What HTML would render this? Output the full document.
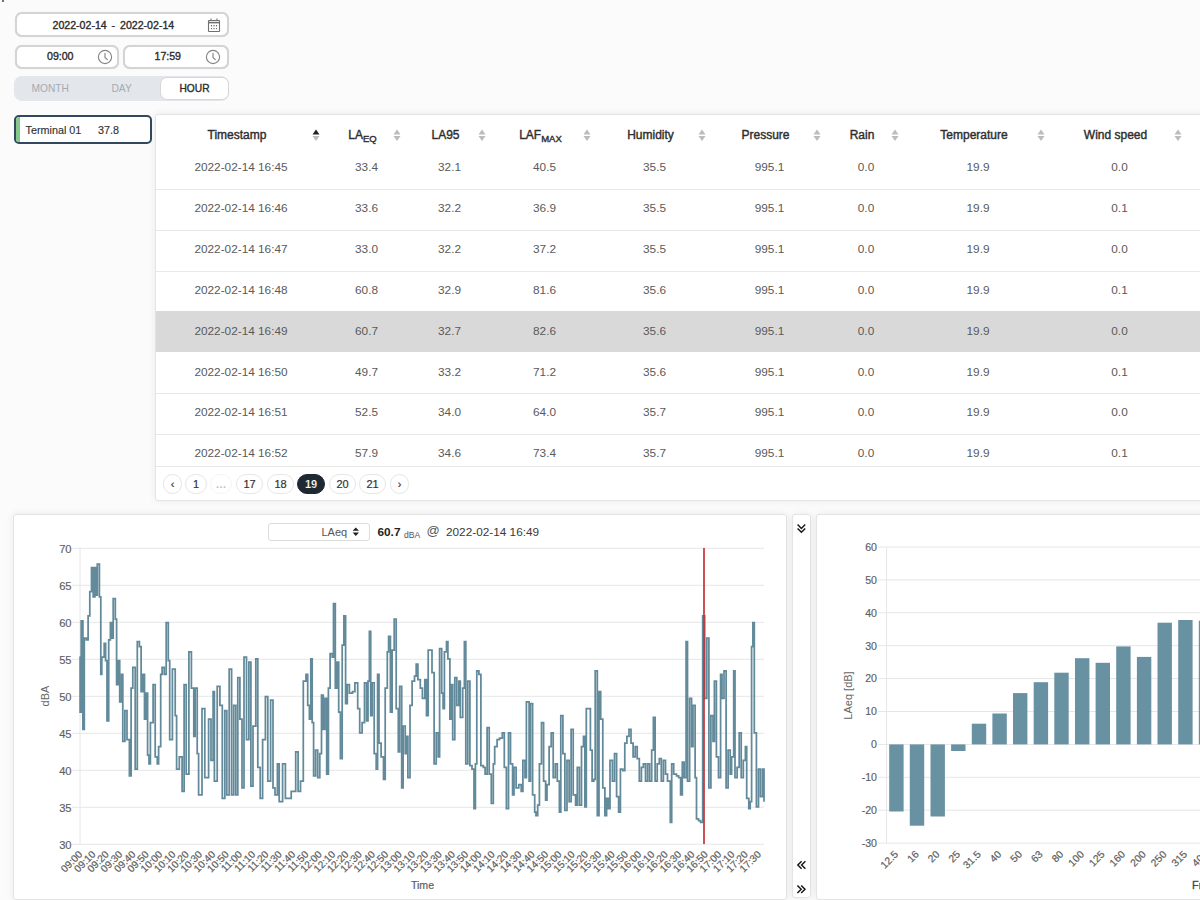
<!DOCTYPE html><html><head><meta charset="utf-8"><style>
*{box-sizing:border-box;margin:0;padding:0}
html,body{width:1200px;height:900px;overflow:hidden;background:#fbfbfb;font-family:"Liberation Sans", sans-serif;}
.abs{position:absolute}
.inp{position:absolute;background:#fff;border:2px solid #d4d4d4;border-radius:7px;box-shadow:0 0 1px rgba(0,0,0,0.15)}
.inp .t{position:absolute;font-size:11px;font-weight:bold;color:#333;white-space:nowrap}
.panel{position:absolute;background:#fff;border:1px solid #e4e4e4;border-radius:3px;box-shadow:0 0 8px rgba(0,0,0,0.07);}
.th{position:absolute;top:128px;font-size:12px;color:#2e2e2e;-webkit-text-stroke:0.4px #2e2e2e;white-space:nowrap;transform:translateX(-50%)} .th sub{font-size:9.5px;vertical-align:-3px;line-height:0}
.td{position:absolute;font-size:11.8px;color:#5a5a5a;white-space:nowrap;transform:translateX(-50%)}
.pg{position:absolute;top:473.5px;height:20px;border:1px solid #e6e6e6;border-radius:10px;font-size:11px;color:#333;-webkit-text-stroke:0.2px #333;text-align:center;line-height:18px;background:#fff}
</style></head><body>
<div class="abs" style="left:2px;top:0;width:1.5px;height:2px;background:#444;border-radius:1px"></div>
<div class="inp" style="left:15px;top:12px;width:214px;height:25px"></div>
<div class="abs" style="left:52.5px;top:19px;font-size:10.6px;color:#2b2b2b;-webkit-text-stroke:0.35px #2b2b2b;white-space:nowrap">2022-02-14</div>
<div class="abs" style="left:111.5px;top:19px;font-size:10.6px;color:#2b2b2b;-webkit-text-stroke:0.35px #2b2b2b;white-space:nowrap">-</div>
<div class="abs" style="left:120px;top:19px;font-size:10.6px;color:#2b2b2b;-webkit-text-stroke:0.35px #2b2b2b;white-space:nowrap">2022-02-14</div>
<svg class="abs" style="left:206px;top:17px" width="16" height="16"><g fill="none" stroke="#707070" stroke-width="1.1"><rect x="2.5" y="3.5" width="11" height="11" rx="0.5"/><line x1="2.5" y1="5.6" x2="13.5" y2="5.6" stroke-width="1.6"/><line x1="5" y1="1.5" x2="5" y2="3.5"/><line x1="11" y1="1.5" x2="11" y2="3.5"/></g><g fill="#555"><circle cx="5.5" cy="8.7" r="0.7"/><circle cx="8" cy="8.7" r="0.7"/><circle cx="10.5" cy="8.7" r="0.7"/><circle cx="5.5" cy="11.6" r="0.7"/><circle cx="8" cy="11.6" r="0.7"/><circle cx="10.5" cy="11.6" r="0.7"/></g></svg>
<div class="inp" style="left:15px;top:45px;width:104px;height:24px"></div>
<div class="abs" style="left:47px;top:50.4px;font-size:10.6px;color:#2b2b2b;-webkit-text-stroke:0.35px #2b2b2b;white-space:nowrap">09:00</div>
<svg class="abs" style="left:97.3px;top:48.7px" width="16" height="16"><g fill="none" stroke="#858585" stroke-width="1.15"><circle cx="8" cy="8" r="6.6"/><path d="M8 4.2 V8.4 L10.3 10.6" stroke-linecap="round"/></g></svg>
<div class="inp" style="left:123px;top:45px;width:106px;height:24px"></div>
<div class="abs" style="left:154.5px;top:50.4px;font-size:10.6px;color:#2b2b2b;-webkit-text-stroke:0.35px #2b2b2b;white-space:nowrap">17:59</div>
<svg class="abs" style="left:205px;top:48.7px" width="16" height="16"><g fill="none" stroke="#858585" stroke-width="1.15"><circle cx="8" cy="8" r="6.6"/><path d="M8 4.2 V8.4 L10.3 10.6" stroke-linecap="round"/></g></svg>
<div class="abs" style="left:14px;top:76px;width:215px;height:25px;background:#e3e6ea;border-radius:8px"></div>
<div class="abs" style="left:31.5px;top:82.5px;font-size:10.2px;color:#a3abb3">MONTH</div>
<div class="abs" style="left:111.5px;top:82.5px;font-size:10.2px;color:#a3abb3">DAY</div>
<div class="abs" style="left:160px;top:77px;width:69px;height:23px;background:#fff;border:1.5px solid #d6d6d6;border-radius:7px"></div>
<div class="abs" style="left:179.5px;top:82.5px;font-size:10.2px;color:#2b2b2b;-webkit-text-stroke:0.35px #2b2b2b">HOUR</div>
<div class="abs" style="left:14px;top:115.2px;width:138px;height:29px;background:#fff;border:2.4px solid #32485e;border-radius:5px;overflow:hidden"><div class="abs" style="left:0;top:0;width:4px;height:100%;background:#86c78b"></div></div>
<div class="abs" style="left:25.5px;top:123.5px;font-size:10.8px;color:#333;-webkit-text-stroke:0.15px #333">Terminal 01</div>
<div class="abs" style="left:98px;top:123.5px;font-size:10.8px;color:#333;-webkit-text-stroke:0.15px #333">37.8</div>
<div class="panel" style="left:155px;top:114px;width:1060px;height:387px"></div>
<div class="abs" style="left:156px;top:311px;width:1044px;height:41px;background:#d9d9d9"></div>
<div class="abs" style="left:156px;top:188.5px;width:1044px;height:1px;background:#e8e8e8"></div>
<div class="abs" style="left:156px;top:229.5px;width:1044px;height:1px;background:#e8e8e8"></div>
<div class="abs" style="left:156px;top:270.5px;width:1044px;height:1px;background:#e8e8e8"></div>
<div class="abs" style="left:156px;top:393px;width:1044px;height:1px;background:#e8e8e8"></div>
<div class="abs" style="left:156px;top:433.5px;width:1044px;height:1px;background:#e8e8e8"></div>
<div class="abs" style="left:156px;top:466px;width:1044px;height:1px;background:#e8e8e8"></div>
<div class="th" style="left:237.0px">Timestamp</div>
<svg class="abs" style="left:312px;top:129px" width="8" height="13"><path d="M0.5 5.5 L4 0.5 L7.5 5.5Z" fill="#222"/><path d="M0.5 7 L4 12 L7.5 7Z" fill="#bbb"/></svg>
<div class="th" style="left:362.5px">LA<sub>EQ</sub></div>
<svg class="abs" style="left:393px;top:129px" width="8" height="13"><path d="M0.5 5.5 L4 0.5 L7.5 5.5Z" fill="#bbb"/><path d="M0.5 7 L4 12 L7.5 7Z" fill="#bbb"/></svg>
<div class="th" style="left:445.5px">LA95</div>
<svg class="abs" style="left:478px;top:129px" width="8" height="13"><path d="M0.5 5.5 L4 0.5 L7.5 5.5Z" fill="#bbb"/><path d="M0.5 7 L4 12 L7.5 7Z" fill="#bbb"/></svg>
<div class="th" style="left:540.5px">LAF<sub>MAX</sub></div>
<svg class="abs" style="left:583px;top:129px" width="8" height="13"><path d="M0.5 5.5 L4 0.5 L7.5 5.5Z" fill="#bbb"/><path d="M0.5 7 L4 12 L7.5 7Z" fill="#bbb"/></svg>
<div class="th" style="left:650.5px">Humidity</div>
<svg class="abs" style="left:698px;top:129px" width="8" height="13"><path d="M0.5 5.5 L4 0.5 L7.5 5.5Z" fill="#bbb"/><path d="M0.5 7 L4 12 L7.5 7Z" fill="#bbb"/></svg>
<div class="th" style="left:765.5px">Pressure</div>
<svg class="abs" style="left:813px;top:129px" width="8" height="13"><path d="M0.5 5.5 L4 0.5 L7.5 5.5Z" fill="#bbb"/><path d="M0.5 7 L4 12 L7.5 7Z" fill="#bbb"/></svg>
<div class="th" style="left:862.0px">Rain</div>
<svg class="abs" style="left:891px;top:129px" width="8" height="13"><path d="M0.5 5.5 L4 0.5 L7.5 5.5Z" fill="#bbb"/><path d="M0.5 7 L4 12 L7.5 7Z" fill="#bbb"/></svg>
<div class="th" style="left:974.0px">Temperature</div>
<svg class="abs" style="left:1037px;top:129px" width="8" height="13"><path d="M0.5 5.5 L4 0.5 L7.5 5.5Z" fill="#bbb"/><path d="M0.5 7 L4 12 L7.5 7Z" fill="#bbb"/></svg>
<div class="th" style="left:1115.5px">Wind speed</div>
<svg class="abs" style="left:1174px;top:129px" width="8" height="13"><path d="M0.5 5.5 L4 0.5 L7.5 5.5Z" fill="#bbb"/><path d="M0.5 7 L4 12 L7.5 7Z" fill="#bbb"/></svg>
<div class="abs" style="left:156px;top:148px;width:1044px;height:318px;overflow:hidden">
<div class="td" style="left:85.0px;top:12.0px">2022-02-14 16:45</div>
<div class="td" style="left:210.5px;top:12.0px">33.4</div>
<div class="td" style="left:293.5px;top:12.0px">32.1</div>
<div class="td" style="left:388.5px;top:12.0px">40.5</div>
<div class="td" style="left:498.5px;top:12.0px">35.5</div>
<div class="td" style="left:613.5px;top:12.0px">995.1</div>
<div class="td" style="left:710.0px;top:12.0px">0.0</div>
<div class="td" style="left:822.0px;top:12.0px">19.9</div>
<div class="td" style="left:963.5px;top:12.0px">0.0</div>
<div class="td" style="left:85.0px;top:52.9px">2022-02-14 16:46</div>
<div class="td" style="left:210.5px;top:52.9px">33.6</div>
<div class="td" style="left:293.5px;top:52.9px">32.2</div>
<div class="td" style="left:388.5px;top:52.9px">36.9</div>
<div class="td" style="left:498.5px;top:52.9px">35.5</div>
<div class="td" style="left:613.5px;top:52.9px">995.1</div>
<div class="td" style="left:710.0px;top:52.9px">0.0</div>
<div class="td" style="left:822.0px;top:52.9px">19.9</div>
<div class="td" style="left:963.5px;top:52.9px">0.1</div>
<div class="td" style="left:85.0px;top:93.8px">2022-02-14 16:47</div>
<div class="td" style="left:210.5px;top:93.8px">33.0</div>
<div class="td" style="left:293.5px;top:93.8px">32.2</div>
<div class="td" style="left:388.5px;top:93.8px">37.2</div>
<div class="td" style="left:498.5px;top:93.8px">35.5</div>
<div class="td" style="left:613.5px;top:93.8px">995.1</div>
<div class="td" style="left:710.0px;top:93.8px">0.0</div>
<div class="td" style="left:822.0px;top:93.8px">19.9</div>
<div class="td" style="left:963.5px;top:93.8px">0.0</div>
<div class="td" style="left:85.0px;top:134.7px">2022-02-14 16:48</div>
<div class="td" style="left:210.5px;top:134.7px">60.8</div>
<div class="td" style="left:293.5px;top:134.7px">32.9</div>
<div class="td" style="left:388.5px;top:134.7px">81.6</div>
<div class="td" style="left:498.5px;top:134.7px">35.6</div>
<div class="td" style="left:613.5px;top:134.7px">995.1</div>
<div class="td" style="left:710.0px;top:134.7px">0.0</div>
<div class="td" style="left:822.0px;top:134.7px">19.9</div>
<div class="td" style="left:963.5px;top:134.7px">0.1</div>
<div class="td" style="left:85.0px;top:175.6px">2022-02-14 16:49</div>
<div class="td" style="left:210.5px;top:175.6px">60.7</div>
<div class="td" style="left:293.5px;top:175.6px">32.7</div>
<div class="td" style="left:388.5px;top:175.6px">82.6</div>
<div class="td" style="left:498.5px;top:175.6px">35.6</div>
<div class="td" style="left:613.5px;top:175.6px">995.1</div>
<div class="td" style="left:710.0px;top:175.6px">0.0</div>
<div class="td" style="left:822.0px;top:175.6px">19.9</div>
<div class="td" style="left:963.5px;top:175.6px">0.0</div>
<div class="td" style="left:85.0px;top:216.5px">2022-02-14 16:50</div>
<div class="td" style="left:210.5px;top:216.5px">49.7</div>
<div class="td" style="left:293.5px;top:216.5px">33.2</div>
<div class="td" style="left:388.5px;top:216.5px">71.2</div>
<div class="td" style="left:498.5px;top:216.5px">35.6</div>
<div class="td" style="left:613.5px;top:216.5px">995.1</div>
<div class="td" style="left:710.0px;top:216.5px">0.0</div>
<div class="td" style="left:822.0px;top:216.5px">19.9</div>
<div class="td" style="left:963.5px;top:216.5px">0.1</div>
<div class="td" style="left:85.0px;top:257.4px">2022-02-14 16:51</div>
<div class="td" style="left:210.5px;top:257.4px">52.5</div>
<div class="td" style="left:293.5px;top:257.4px">34.0</div>
<div class="td" style="left:388.5px;top:257.4px">64.0</div>
<div class="td" style="left:498.5px;top:257.4px">35.7</div>
<div class="td" style="left:613.5px;top:257.4px">995.1</div>
<div class="td" style="left:710.0px;top:257.4px">0.0</div>
<div class="td" style="left:822.0px;top:257.4px">19.9</div>
<div class="td" style="left:963.5px;top:257.4px">0.0</div>
<div class="td" style="left:85.0px;top:298.3px">2022-02-14 16:52</div>
<div class="td" style="left:210.5px;top:298.3px">57.9</div>
<div class="td" style="left:293.5px;top:298.3px">34.6</div>
<div class="td" style="left:388.5px;top:298.3px">73.4</div>
<div class="td" style="left:498.5px;top:298.3px">35.7</div>
<div class="td" style="left:613.5px;top:298.3px">995.1</div>
<div class="td" style="left:710.0px;top:298.3px">0.0</div>
<div class="td" style="left:822.0px;top:298.3px">19.9</div>
<div class="td" style="left:963.5px;top:298.3px">0.1</div>
</div>
<div class="pg" style="left:163px;width:19px;">&lsaquo;</div>
<div class="pg" style="left:185px;width:22px;">1</div>
<div class="pg" style="left:210px;width:22px;border-color:#f5f5f5;color:#e4e4e4">&hellip;</div>
<div class="pg" style="left:236px;width:27px;">17</div>
<div class="pg" style="left:267px;width:27px;">18</div>
<div class="pg" style="left:297px;width:28px;background:#1f2933;border-color:#1f2933;color:#fff;font-weight:bold">19</div>
<div class="pg" style="left:329px;width:27px;">20</div>
<div class="pg" style="left:359px;width:27px;">21</div>
<div class="pg" style="left:390px;width:19px;">&rsaquo;</div>
<div class="panel" style="left:13px;top:513.5px;width:773.5px;height:386px"></div>
<div class="panel" style="left:792px;top:513.5px;width:18.5px;height:384px"></div>
<div class="panel" style="left:816px;top:513.5px;width:400px;height:386px"></div>
<div class="abs" style="left:267.5px;top:523px;width:102.5px;height:17.5px;border:1px solid #dcdcdc;border-radius:3px;background:#fff"></div>
<div class="abs" style="left:321.5px;top:526px;font-size:11px;color:#555">LAeq</div>
<svg class="abs" style="left:352px;top:527px" width="8" height="10"><path d="M0.6 3.8 L3.8 0.4 L7 3.8Z M0.6 5.6 L3.8 9 L7 5.6Z" fill="#222"/></svg>
<div class="abs" style="left:377.5px;top:525.3px;font-size:11.8px;font-weight:bold;color:#222">60.7</div>
<div class="abs" style="left:404px;top:529.5px;font-size:8.6px;color:#555">dBA</div>
<div class="abs" style="left:426.5px;top:523.3px;font-size:13px;color:#555">@</div>
<div class="abs" style="left:446px;top:525.3px;font-size:11.8px;color:#3a3a3a">2022-02-14 16:49</div>
<svg class="abs" style="left:792px;top:518px" width="18" height="380"><g fill="none" stroke="#151515" stroke-width="1.45"><path d="M5.6 6.6 L9.4 10.4 L13.2 6.6"/><path d="M5.6 10.4 L9.4 14.2 L13.2 10.4"/><path d="M9.6 343.2 L5.8 347 L9.6 350.8"/><path d="M13.4 343.2 L9.6 347 L13.4 350.8"/><path d="M5.4 367.4 L9.2 371.2 L5.4 375"/><path d="M9.2 367.4 L13 371.2 L9.2 375"/></g></svg>
<svg class="abs" style="left:0;top:0" width="1200" height="900" font-family="Liberation Sans, sans-serif">
<line x1="72" x2="764" y1="548.3" y2="548.3" stroke="#e6e6e6" stroke-width="1"/>
<text x="71.6" y="552.5" text-anchor="end" font-size="11.2" fill="#5e5e5e" stroke="#5e5e5e" stroke-width="0.15">70</text>
<line x1="72" x2="764" y1="585.3" y2="585.3" stroke="#e6e6e6" stroke-width="1"/>
<text x="71.6" y="589.5" text-anchor="end" font-size="11.2" fill="#5e5e5e" stroke="#5e5e5e" stroke-width="0.15">65</text>
<line x1="72" x2="764" y1="622.3" y2="622.3" stroke="#e6e6e6" stroke-width="1"/>
<text x="71.6" y="626.5" text-anchor="end" font-size="11.2" fill="#5e5e5e" stroke="#5e5e5e" stroke-width="0.15">60</text>
<line x1="72" x2="764" y1="659.3" y2="659.3" stroke="#e6e6e6" stroke-width="1"/>
<text x="71.6" y="663.5" text-anchor="end" font-size="11.2" fill="#5e5e5e" stroke="#5e5e5e" stroke-width="0.15">55</text>
<line x1="72" x2="764" y1="696.3" y2="696.3" stroke="#e6e6e6" stroke-width="1"/>
<text x="71.6" y="700.5" text-anchor="end" font-size="11.2" fill="#5e5e5e" stroke="#5e5e5e" stroke-width="0.15">50</text>
<line x1="72" x2="764" y1="733.3" y2="733.3" stroke="#e6e6e6" stroke-width="1"/>
<text x="71.6" y="737.5" text-anchor="end" font-size="11.2" fill="#5e5e5e" stroke="#5e5e5e" stroke-width="0.15">45</text>
<line x1="72" x2="764" y1="770.3" y2="770.3" stroke="#e6e6e6" stroke-width="1"/>
<text x="71.6" y="774.5" text-anchor="end" font-size="11.2" fill="#5e5e5e" stroke="#5e5e5e" stroke-width="0.15">40</text>
<line x1="72" x2="764" y1="807.3" y2="807.3" stroke="#e6e6e6" stroke-width="1"/>
<text x="71.6" y="811.5" text-anchor="end" font-size="11.2" fill="#5e5e5e" stroke="#5e5e5e" stroke-width="0.15">35</text>
<line x1="72" x2="764" y1="844.3" y2="844.3" stroke="#e6e6e6" stroke-width="1"/>
<text x="71.6" y="848.5" text-anchor="end" font-size="11.2" fill="#5e5e5e" stroke="#5e5e5e" stroke-width="0.15">30</text>
<line x1="80" x2="80" y1="548" y2="844.5" stroke="#e6e6e6" stroke-width="1"/>
<text transform="translate(48.5,696) rotate(-90)" text-anchor="middle" font-size="11" fill="#666">dBA</text>
<text transform="translate(83.0,855) rotate(-45)" text-anchor="end" font-size="10.2" fill="#5e5e5e" stroke="#5e5e5e" stroke-width="0.2">09:00</text>
<text transform="translate(96.3,855) rotate(-45)" text-anchor="end" font-size="10.2" fill="#5e5e5e" stroke="#5e5e5e" stroke-width="0.2">09:10</text>
<text transform="translate(109.6,855) rotate(-45)" text-anchor="end" font-size="10.2" fill="#5e5e5e" stroke="#5e5e5e" stroke-width="0.2">09:20</text>
<text transform="translate(122.9,855) rotate(-45)" text-anchor="end" font-size="10.2" fill="#5e5e5e" stroke="#5e5e5e" stroke-width="0.2">09:30</text>
<text transform="translate(136.2,855) rotate(-45)" text-anchor="end" font-size="10.2" fill="#5e5e5e" stroke="#5e5e5e" stroke-width="0.2">09:40</text>
<text transform="translate(149.6,855) rotate(-45)" text-anchor="end" font-size="10.2" fill="#5e5e5e" stroke="#5e5e5e" stroke-width="0.2">09:50</text>
<text transform="translate(162.9,855) rotate(-45)" text-anchor="end" font-size="10.2" fill="#5e5e5e" stroke="#5e5e5e" stroke-width="0.2">10:00</text>
<text transform="translate(176.2,855) rotate(-45)" text-anchor="end" font-size="10.2" fill="#5e5e5e" stroke="#5e5e5e" stroke-width="0.2">10:10</text>
<text transform="translate(189.5,855) rotate(-45)" text-anchor="end" font-size="10.2" fill="#5e5e5e" stroke="#5e5e5e" stroke-width="0.2">10:20</text>
<text transform="translate(202.8,855) rotate(-45)" text-anchor="end" font-size="10.2" fill="#5e5e5e" stroke="#5e5e5e" stroke-width="0.2">10:30</text>
<text transform="translate(216.1,855) rotate(-45)" text-anchor="end" font-size="10.2" fill="#5e5e5e" stroke="#5e5e5e" stroke-width="0.2">10:40</text>
<text transform="translate(229.4,855) rotate(-45)" text-anchor="end" font-size="10.2" fill="#5e5e5e" stroke="#5e5e5e" stroke-width="0.2">10:50</text>
<text transform="translate(242.7,855) rotate(-45)" text-anchor="end" font-size="10.2" fill="#5e5e5e" stroke="#5e5e5e" stroke-width="0.2">11:00</text>
<text transform="translate(256.0,855) rotate(-45)" text-anchor="end" font-size="10.2" fill="#5e5e5e" stroke="#5e5e5e" stroke-width="0.2">11:10</text>
<text transform="translate(269.3,855) rotate(-45)" text-anchor="end" font-size="10.2" fill="#5e5e5e" stroke="#5e5e5e" stroke-width="0.2">11:20</text>
<text transform="translate(282.6,855) rotate(-45)" text-anchor="end" font-size="10.2" fill="#5e5e5e" stroke="#5e5e5e" stroke-width="0.2">11:30</text>
<text transform="translate(296.0,855) rotate(-45)" text-anchor="end" font-size="10.2" fill="#5e5e5e" stroke="#5e5e5e" stroke-width="0.2">11:40</text>
<text transform="translate(309.3,855) rotate(-45)" text-anchor="end" font-size="10.2" fill="#5e5e5e" stroke="#5e5e5e" stroke-width="0.2">11:50</text>
<text transform="translate(322.6,855) rotate(-45)" text-anchor="end" font-size="10.2" fill="#5e5e5e" stroke="#5e5e5e" stroke-width="0.2">12:00</text>
<text transform="translate(335.9,855) rotate(-45)" text-anchor="end" font-size="10.2" fill="#5e5e5e" stroke="#5e5e5e" stroke-width="0.2">12:10</text>
<text transform="translate(349.2,855) rotate(-45)" text-anchor="end" font-size="10.2" fill="#5e5e5e" stroke="#5e5e5e" stroke-width="0.2">12:20</text>
<text transform="translate(362.5,855) rotate(-45)" text-anchor="end" font-size="10.2" fill="#5e5e5e" stroke="#5e5e5e" stroke-width="0.2">12:30</text>
<text transform="translate(375.8,855) rotate(-45)" text-anchor="end" font-size="10.2" fill="#5e5e5e" stroke="#5e5e5e" stroke-width="0.2">12:40</text>
<text transform="translate(389.1,855) rotate(-45)" text-anchor="end" font-size="10.2" fill="#5e5e5e" stroke="#5e5e5e" stroke-width="0.2">12:50</text>
<text transform="translate(402.4,855) rotate(-45)" text-anchor="end" font-size="10.2" fill="#5e5e5e" stroke="#5e5e5e" stroke-width="0.2">13:00</text>
<text transform="translate(415.8,855) rotate(-45)" text-anchor="end" font-size="10.2" fill="#5e5e5e" stroke="#5e5e5e" stroke-width="0.2">13:10</text>
<text transform="translate(429.1,855) rotate(-45)" text-anchor="end" font-size="10.2" fill="#5e5e5e" stroke="#5e5e5e" stroke-width="0.2">13:20</text>
<text transform="translate(442.4,855) rotate(-45)" text-anchor="end" font-size="10.2" fill="#5e5e5e" stroke="#5e5e5e" stroke-width="0.2">13:30</text>
<text transform="translate(455.7,855) rotate(-45)" text-anchor="end" font-size="10.2" fill="#5e5e5e" stroke="#5e5e5e" stroke-width="0.2">13:40</text>
<text transform="translate(469.0,855) rotate(-45)" text-anchor="end" font-size="10.2" fill="#5e5e5e" stroke="#5e5e5e" stroke-width="0.2">13:50</text>
<text transform="translate(482.3,855) rotate(-45)" text-anchor="end" font-size="10.2" fill="#5e5e5e" stroke="#5e5e5e" stroke-width="0.2">14:00</text>
<text transform="translate(495.6,855) rotate(-45)" text-anchor="end" font-size="10.2" fill="#5e5e5e" stroke="#5e5e5e" stroke-width="0.2">14:10</text>
<text transform="translate(508.9,855) rotate(-45)" text-anchor="end" font-size="10.2" fill="#5e5e5e" stroke="#5e5e5e" stroke-width="0.2">14:20</text>
<text transform="translate(522.2,855) rotate(-45)" text-anchor="end" font-size="10.2" fill="#5e5e5e" stroke="#5e5e5e" stroke-width="0.2">14:30</text>
<text transform="translate(535.5,855) rotate(-45)" text-anchor="end" font-size="10.2" fill="#5e5e5e" stroke="#5e5e5e" stroke-width="0.2">14:40</text>
<text transform="translate(548.9,855) rotate(-45)" text-anchor="end" font-size="10.2" fill="#5e5e5e" stroke="#5e5e5e" stroke-width="0.2">14:50</text>
<text transform="translate(562.2,855) rotate(-45)" text-anchor="end" font-size="10.2" fill="#5e5e5e" stroke="#5e5e5e" stroke-width="0.2">15:00</text>
<text transform="translate(575.5,855) rotate(-45)" text-anchor="end" font-size="10.2" fill="#5e5e5e" stroke="#5e5e5e" stroke-width="0.2">15:10</text>
<text transform="translate(588.8,855) rotate(-45)" text-anchor="end" font-size="10.2" fill="#5e5e5e" stroke="#5e5e5e" stroke-width="0.2">15:20</text>
<text transform="translate(602.1,855) rotate(-45)" text-anchor="end" font-size="10.2" fill="#5e5e5e" stroke="#5e5e5e" stroke-width="0.2">15:30</text>
<text transform="translate(615.4,855) rotate(-45)" text-anchor="end" font-size="10.2" fill="#5e5e5e" stroke="#5e5e5e" stroke-width="0.2">15:40</text>
<text transform="translate(628.7,855) rotate(-45)" text-anchor="end" font-size="10.2" fill="#5e5e5e" stroke="#5e5e5e" stroke-width="0.2">15:50</text>
<text transform="translate(642.0,855) rotate(-45)" text-anchor="end" font-size="10.2" fill="#5e5e5e" stroke="#5e5e5e" stroke-width="0.2">16:00</text>
<text transform="translate(655.3,855) rotate(-45)" text-anchor="end" font-size="10.2" fill="#5e5e5e" stroke="#5e5e5e" stroke-width="0.2">16:10</text>
<text transform="translate(668.6,855) rotate(-45)" text-anchor="end" font-size="10.2" fill="#5e5e5e" stroke="#5e5e5e" stroke-width="0.2">16:20</text>
<text transform="translate(682.0,855) rotate(-45)" text-anchor="end" font-size="10.2" fill="#5e5e5e" stroke="#5e5e5e" stroke-width="0.2">16:30</text>
<text transform="translate(695.3,855) rotate(-45)" text-anchor="end" font-size="10.2" fill="#5e5e5e" stroke="#5e5e5e" stroke-width="0.2">16:40</text>
<text transform="translate(708.6,855) rotate(-45)" text-anchor="end" font-size="10.2" fill="#5e5e5e" stroke="#5e5e5e" stroke-width="0.2">16:50</text>
<text transform="translate(721.9,855) rotate(-45)" text-anchor="end" font-size="10.2" fill="#5e5e5e" stroke="#5e5e5e" stroke-width="0.2">17:00</text>
<text transform="translate(735.2,855) rotate(-45)" text-anchor="end" font-size="10.2" fill="#5e5e5e" stroke="#5e5e5e" stroke-width="0.2">17:10</text>
<text transform="translate(748.5,855) rotate(-45)" text-anchor="end" font-size="10.2" fill="#5e5e5e" stroke="#5e5e5e" stroke-width="0.2">17:20</text>
<text transform="translate(761.8,855) rotate(-45)" text-anchor="end" font-size="10.2" fill="#5e5e5e" stroke="#5e5e5e" stroke-width="0.2">17:30</text>
<text x="422.5" y="888.8" text-anchor="middle" font-size="10.6" fill="#5e5e5e" stroke="#5e5e5e" stroke-width="0.2">Time</text>
<path d="M79.4 657.1H80.1V712.2H81.2V620.9H82.9V729.4H84.3V638.1H86.3V639.9H88.1V615.8H89.8V591.7H91.5V567.5H93.2V596.8H94.9V567.5H96.0V595.1H97.3V564.1H99.4V596.8H100.8V674.3H101.8V657.1H104.2V643.3H105.6V660.5H107.0V720.8H108.7V639.9H110.4V622.6H111.8V638.1H113.2V598.5H115.3V619.2H116.6V684.6H118.0V660.5H119.7V701.8H121.5V674.3H122.8V741.4H124.9V710.5H127.0V739.7H129.4V775.9H131.1V688.1H132.8V667.4H135.2V769.0H137.3V641.6H139.4V646.7H141.1V691.5H142.8V674.3H144.5V719.1H146.2V693.2H147.6V755.2H149.0V763.8H150.4V722.5H153.1V684.6H155.2V756.9H157.3V763.8H158.6V746.6H160.7V674.3H162.1V667.4H164.2V674.3H166.2V622.6H168.3V660.5H169.7V739.7H172.4V669.1H175.2V715.6H176.6V769.0H179.3V756.9H182.1V791.4H184.1V684.6H186.2V774.2H188.9V651.9H191.4V688.1H193.8V736.3H195.1V688.1H197.2V753.5H198.6V794.8H202.0V708.7H204.8V777.6H208.6V719.1H211.0V760.4H213.1V691.5H214.4V781.0H217.2V686.3H219.9V705.3H222.3V798.3H224.8V710.5H226.8V794.8H229.2V669.1H231.6V794.8H233.7V705.3H235.8V794.8H237.8V677.7H239.9V719.1H242.0V787.9H244.0V657.1H246.5V739.7H248.9V662.2H250.9V786.2H253.0V726.0H255.8V658.8H257.8V767.3H260.2V798.3H262.6V739.7H265.4V696.7H267.8V781.0H270.6V700.1H273.0V787.9H275.0V794.8H277.4V763.8H279.2V801.7H282.6V763.8H285.4V798.3H291.2V791.4H295.7V751.8H298.1V791.4H300.5V781.0H303.3V681.2H306.0V674.3H307.7V705.3H309.4V719.1H310.8V658.8H312.2V722.5H313.6V775.9H315.6V750.1H317.7V777.6H319.8V753.5H321.5V695.0H323.2V729.4H324.9V698.4H326.7V774.2H328.4V688.1H330.1V653.6H332.2V657.1H333.5V603.7H335.3V688.1H337.0V662.2H338.7V712.2H340.4V758.7H342.2V645.0H343.9V615.8H345.6V703.6H347.3V684.6H349.4V693.2H352.5V691.5H354.9V682.9H357.7V708.7H359.7V732.8H362.1V722.5H364.5V682.9H366.6V720.8H368.0V681.2H369.4V631.3H370.7V715.6H372.1V682.9H374.2V753.5H376.2V769.0H377.6V674.3H379.0V743.2H381.1V756.9H383.5V779.3H385.2V688.1H387.3V651.9H388.6V636.4H390.4V712.2H392.1V650.2H394.2V619.2H396.2V708.7H398.3V751.8H399.7V686.3H401.7V787.9H403.1V726.0H405.2V753.5H406.6V736.3H407.9V777.6H410.0V705.3H412.1V681.2H414.5V676.0H416.2V664.0H417.9V679.5H420.3V688.1H422.4V698.4H424.8V679.5H426.5V715.6H428.2V650.2H430.0V650.2H432.0V672.6H434.1V763.8H436.2V732.8H438.2V756.9H439.6V648.5H441.7V693.2H443.1V708.7H444.4V651.9H446.5V641.6H447.9V658.8H449.9V719.1H451.3V684.6H452.7V739.7H454.8V677.7H456.8V705.3H458.9V681.2H460.3V717.3H462.7V688.1H464.4V641.6H465.8V763.8H467.8V681.2H469.9V765.6H472.0V769.0H474.0V808.6H475.4V763.8H476.8V670.9H478.9V674.3H480.9V765.6H483.3V767.3H485.1V774.2H487.1V727.7H489.2V774.2H491.3V803.4H493.3V763.8H494.7V746.6H497.1V739.7H499.5V738.0H502.3V732.8H504.3V767.3H506.4V808.6H508.5V732.8H510.5V763.8H512.6V794.8H514.0V767.3H516.1V787.9H518.8V784.5H521.2V791.4H522.9V760.4H525.0V777.6H526.4V701.8H529.1V781.0H530.5V703.6H532.6V794.8H534.7V812.0H536.0V815.5H537.7V805.2H539.4V763.8H541.5V722.5H543.6V781.0H545.6V800.0H547.0V784.5H549.1V746.6H551.2V732.8H553.2V777.6H555.3V763.8H557.3V781.0H559.4V812.0H560.8V715.6H562.9V753.5H564.9V810.3H567.0V760.4H569.1V801.7H571.1V729.4H573.2V794.8H575.6V805.2H577.3V767.3H579.4V805.2H581.5V746.6H583.5V736.3H584.9V806.9H586.3V708.7H588.3V708.7H590.4V750.1H592.1V781.0H593.9V779.3H595.2V670.9H597.3V815.5H599.0V691.5H600.7V719.1H602.8V787.9H604.9V815.5H606.6V798.3H608.3V808.6H610.0V760.4H612.4V781.0H614.5V753.5H616.6V796.5H618.6V812.0H620.4V769.0H622.8V770.7H624.8V743.2H626.9V736.3H629.0V729.4H631.0V743.2H633.1V756.9H635.2V746.6H637.2V758.7H639.3V781.0H641.4V767.3H643.4V763.8H645.5V781.0H647.6V763.8H649.6V781.0H651.7V750.1H653.4V717.3H655.1V781.0H657.2V763.8H659.3V758.7H661.3V781.0H663.4V760.4H665.5V774.2H667.5V781.0H670.3V822.4H671.7V763.8H673.7V774.2H676.5V775.9H678.6V777.6H680.6V794.8H682.3V762.1H684.1V777.6H686.1V641.6H687.5V781.0H689.6V698.4H691.6V746.6H693.0V705.3H695.1V777.6H696.5V818.9H698.5V820.6H700.6V822.4H702.7V615.8H704.7V698.4H706.8V638.1H708.9V787.9H710.9V715.6H713.0V741.4H714.4V681.2H716.4V756.9H718.5V777.6H720.6V674.3H722.0V698.4H724.0V670.9H726.1V787.9H728.1V750.1H730.2V774.2H731.6V756.9H733.7V670.9H735.0V777.6H737.1V767.3H739.2V732.8H741.2V777.6H743.3V760.4H745.4V746.6H746.7V798.3H748.8V808.6H750.2V801.7H751.6V646.7H752.9V622.6H754.3V732.8H756.4V806.9H758.5V769.0H760.5V796.5H762.6V769.0H764.0V801.7H764" fill="none" stroke="#628a9a" stroke-width="1.75" stroke-linejoin="miter"/>
<line x1="704" x2="704" y1="548" y2="844" stroke="#c23236" stroke-width="1.7"/>
<line x1="878" x2="1200" y1="547.0" y2="547.0" stroke="#e6e6e6" stroke-width="1"/>
<text x="877" y="550.8" text-anchor="end" font-size="10.6" fill="#5e5e5e" stroke="#5e5e5e" stroke-width="0.15">60</text>
<line x1="878" x2="1200" y1="579.9" y2="579.9" stroke="#e6e6e6" stroke-width="1"/>
<text x="877" y="583.7" text-anchor="end" font-size="10.6" fill="#5e5e5e" stroke="#5e5e5e" stroke-width="0.15">50</text>
<line x1="878" x2="1200" y1="612.8" y2="612.8" stroke="#e6e6e6" stroke-width="1"/>
<text x="877" y="616.6" text-anchor="end" font-size="10.6" fill="#5e5e5e" stroke="#5e5e5e" stroke-width="0.15">40</text>
<line x1="878" x2="1200" y1="645.7" y2="645.7" stroke="#e6e6e6" stroke-width="1"/>
<text x="877" y="649.5" text-anchor="end" font-size="10.6" fill="#5e5e5e" stroke="#5e5e5e" stroke-width="0.15">30</text>
<line x1="878" x2="1200" y1="678.6" y2="678.6" stroke="#e6e6e6" stroke-width="1"/>
<text x="877" y="682.4" text-anchor="end" font-size="10.6" fill="#5e5e5e" stroke="#5e5e5e" stroke-width="0.15">20</text>
<line x1="878" x2="1200" y1="711.5" y2="711.5" stroke="#e6e6e6" stroke-width="1"/>
<text x="877" y="715.3" text-anchor="end" font-size="10.6" fill="#5e5e5e" stroke="#5e5e5e" stroke-width="0.15">10</text>
<line x1="878" x2="1200" y1="744.4" y2="744.4" stroke="#e6e6e6" stroke-width="1"/>
<text x="877" y="748.2" text-anchor="end" font-size="10.6" fill="#5e5e5e" stroke="#5e5e5e" stroke-width="0.15">0</text>
<line x1="878" x2="1200" y1="777.3" y2="777.3" stroke="#e6e6e6" stroke-width="1"/>
<text x="877" y="781.1" text-anchor="end" font-size="10.6" fill="#5e5e5e" stroke="#5e5e5e" stroke-width="0.15">-10</text>
<line x1="878" x2="1200" y1="810.2" y2="810.2" stroke="#e6e6e6" stroke-width="1"/>
<text x="877" y="814.0" text-anchor="end" font-size="10.6" fill="#5e5e5e" stroke="#5e5e5e" stroke-width="0.15">-20</text>
<line x1="878" x2="1200" y1="843.1" y2="843.1" stroke="#e6e6e6" stroke-width="1"/>
<text x="877" y="846.9" text-anchor="end" font-size="10.6" fill="#5e5e5e" stroke="#5e5e5e" stroke-width="0.15">-30</text>
<line x1="886.6" x2="886.6" y1="547" y2="843.5" stroke="#e6e6e6" stroke-width="1"/>
<rect x="889.2" y="744.4" width="14.4" height="67.1" fill="#6891a2"/>
<text transform="translate(898.9,855) rotate(-45)" text-anchor="end" font-size="10.3" fill="#5e5e5e" stroke="#5e5e5e" stroke-width="0.2">12.5</text>
<rect x="909.8" y="744.4" width="14.4" height="81.3" fill="#6891a2"/>
<text transform="translate(919.5,855) rotate(-45)" text-anchor="end" font-size="10.3" fill="#5e5e5e" stroke="#5e5e5e" stroke-width="0.2">16</text>
<rect x="930.5" y="744.4" width="14.4" height="72.1" fill="#6891a2"/>
<text transform="translate(940.2,855) rotate(-45)" text-anchor="end" font-size="10.3" fill="#5e5e5e" stroke="#5e5e5e" stroke-width="0.2">20</text>
<rect x="951.1" y="744.4" width="14.4" height="6.6" fill="#6891a2"/>
<text transform="translate(960.8,855) rotate(-45)" text-anchor="end" font-size="10.3" fill="#5e5e5e" stroke="#5e5e5e" stroke-width="0.2">25</text>
<rect x="971.8" y="723.7" width="14.4" height="20.7" fill="#6891a2"/>
<text transform="translate(981.5,855) rotate(-45)" text-anchor="end" font-size="10.3" fill="#5e5e5e" stroke="#5e5e5e" stroke-width="0.2">31.5</text>
<rect x="992.4" y="713.5" width="14.4" height="30.9" fill="#6891a2"/>
<text transform="translate(1002.1,855) rotate(-45)" text-anchor="end" font-size="10.3" fill="#5e5e5e" stroke="#5e5e5e" stroke-width="0.2">40</text>
<rect x="1013.0" y="693.1" width="14.4" height="51.3" fill="#6891a2"/>
<text transform="translate(1022.7,855) rotate(-45)" text-anchor="end" font-size="10.3" fill="#5e5e5e" stroke="#5e5e5e" stroke-width="0.2">50</text>
<rect x="1033.7" y="682.2" width="14.4" height="62.2" fill="#6891a2"/>
<text transform="translate(1043.4,855) rotate(-45)" text-anchor="end" font-size="10.3" fill="#5e5e5e" stroke="#5e5e5e" stroke-width="0.2">63</text>
<rect x="1054.3" y="672.7" width="14.4" height="71.7" fill="#6891a2"/>
<text transform="translate(1064.0,855) rotate(-45)" text-anchor="end" font-size="10.3" fill="#5e5e5e" stroke="#5e5e5e" stroke-width="0.2">80</text>
<rect x="1075.0" y="658.2" width="14.4" height="86.2" fill="#6891a2"/>
<text transform="translate(1084.7,855) rotate(-45)" text-anchor="end" font-size="10.3" fill="#5e5e5e" stroke="#5e5e5e" stroke-width="0.2">100</text>
<rect x="1095.6" y="662.8" width="14.4" height="81.6" fill="#6891a2"/>
<text transform="translate(1105.3,855) rotate(-45)" text-anchor="end" font-size="10.3" fill="#5e5e5e" stroke="#5e5e5e" stroke-width="0.2">125</text>
<rect x="1116.2" y="646.4" width="14.4" height="98.0" fill="#6891a2"/>
<text transform="translate(1125.9,855) rotate(-45)" text-anchor="end" font-size="10.3" fill="#5e5e5e" stroke="#5e5e5e" stroke-width="0.2">160</text>
<rect x="1136.9" y="656.9" width="14.4" height="87.5" fill="#6891a2"/>
<text transform="translate(1146.6,855) rotate(-45)" text-anchor="end" font-size="10.3" fill="#5e5e5e" stroke="#5e5e5e" stroke-width="0.2">200</text>
<rect x="1157.5" y="622.7" width="14.4" height="121.7" fill="#6891a2"/>
<text transform="translate(1167.2,855) rotate(-45)" text-anchor="end" font-size="10.3" fill="#5e5e5e" stroke="#5e5e5e" stroke-width="0.2">250</text>
<rect x="1178.2" y="620.0" width="14.4" height="124.4" fill="#6891a2"/>
<text transform="translate(1187.9,855) rotate(-45)" text-anchor="end" font-size="10.3" fill="#5e5e5e" stroke="#5e5e5e" stroke-width="0.2">315</text>
<rect x="1198.8" y="620.7" width="14.4" height="123.7" fill="#6891a2"/>
<text transform="translate(1208.5,855) rotate(-45)" text-anchor="end" font-size="10.3" fill="#5e5e5e" stroke="#5e5e5e" stroke-width="0.2">400</text>
<rect x="1219.4" y="619.4" width="14.4" height="125.0" fill="#6891a2"/>
<text transform="translate(1229.1,855) rotate(-45)" text-anchor="end" font-size="10.3" fill="#5e5e5e" stroke="#5e5e5e" stroke-width="0.2">500</text>
<text transform="translate(852,695.5) rotate(-90)" text-anchor="middle" font-size="11" fill="#666">LAeq [dB]</text>
<text x="1192" y="888.5" font-size="11" fill="#444" stroke="#444" stroke-width="0.3">Frequency [Hz]</text>
</svg>
</body></html>
